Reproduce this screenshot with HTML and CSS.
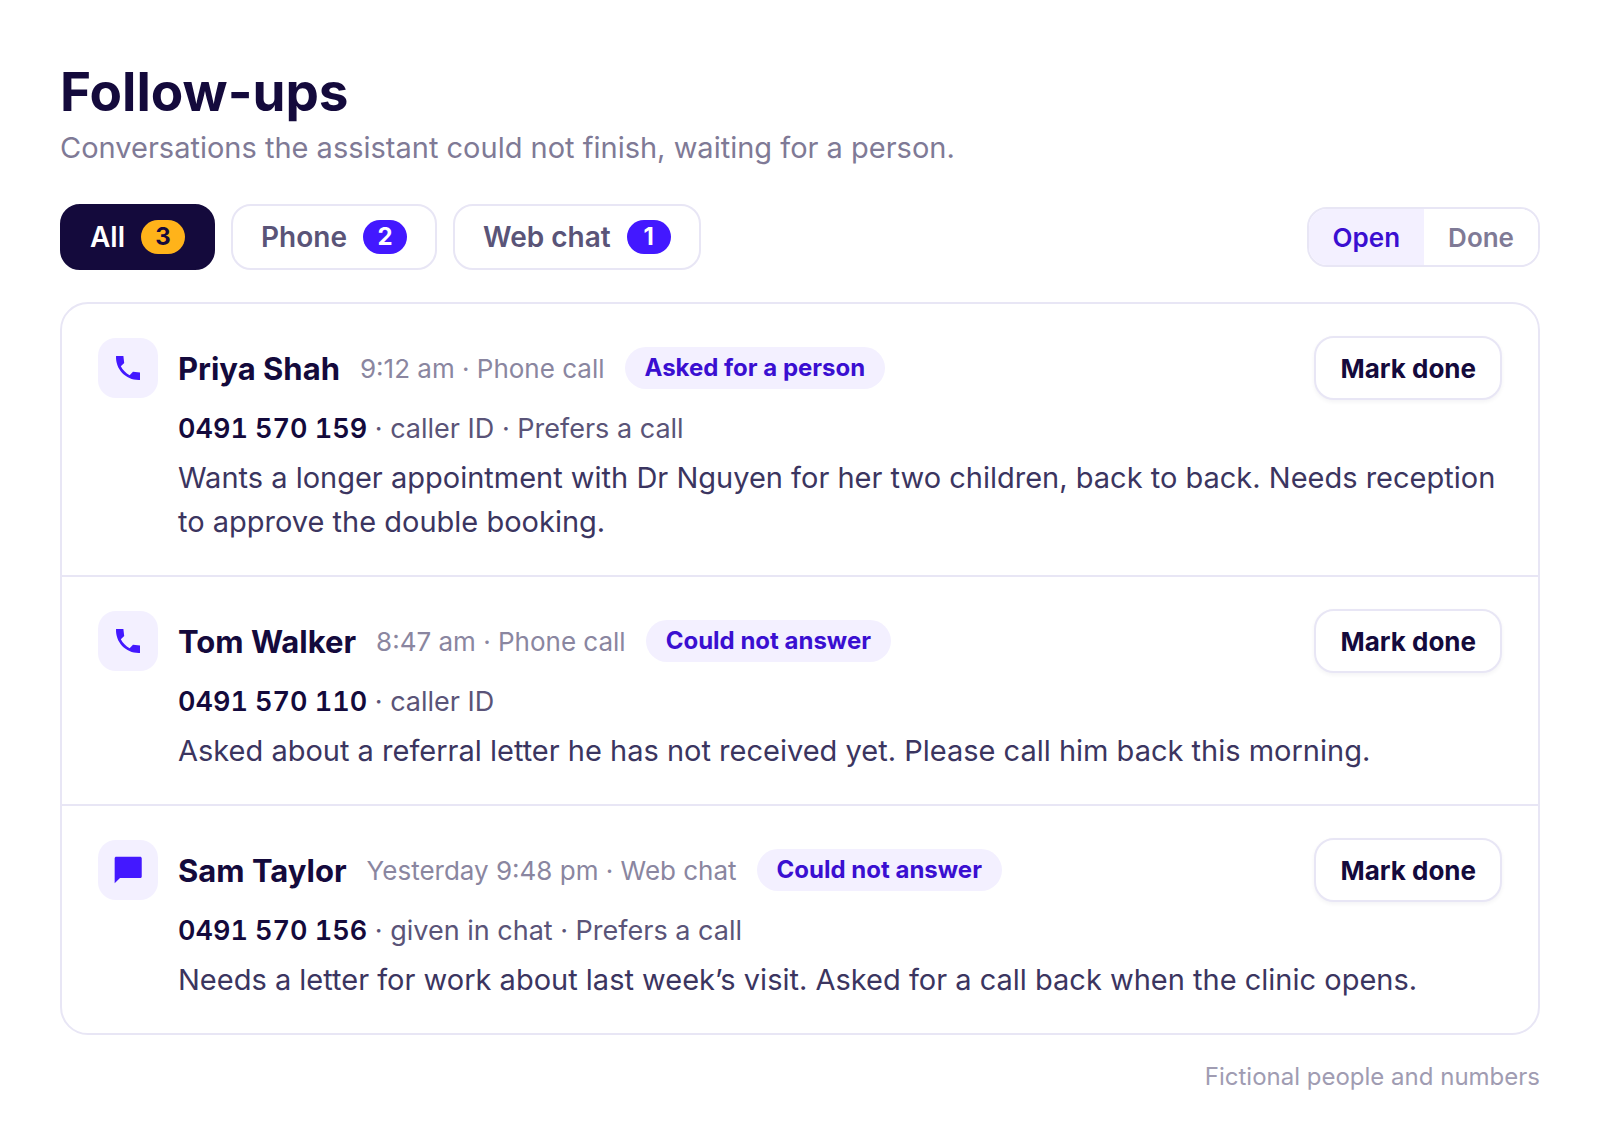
FILE: index.html
```html
<!DOCTYPE html>
<html lang="en">
<head>
  <meta charset="UTF-8" />
  <meta name="viewport" content="width=device-width, initial-scale=1.0"/>
  <title>Follow-ups</title>
  <link rel="stylesheet" href="styles.css">
</head>
<body>

<main class="page">
  <h1>Follow-ups</h1>
  <p class="subtitle">Conversations the assistant could not finish, waiting for a person.</p>

  <div class="toolbar">
    <div class="tabs">
      <button class="tab active" type="button">All <span class="count">3</span></button>
      <button class="tab" type="button">Phone <span class="count">2</span></button>
      <button class="tab" type="button">Web chat <span class="count">1</span></button>
    </div>
    <div class="toggle">
      <button class="active" type="button">Open</button>
      <button type="button">Done</button>
    </div>
  </div>

  <ul class="list">
    <li class="item">
      <div class="icon">
        <svg viewBox="0 0 24 24"><path d="M21 15.46l-5.27-.61-2.52 2.52c-2.83-1.44-5.15-3.75-6.59-6.59l2.53-2.53L8.54 3H3.03C2.45 13.18 10.82 21.55 21 20.97v-5.51z"/></svg>
      </div>
      <div class="body">
        <div class="head">
          <h2>Priya Shah</h2>
          <span class="meta">9:12 am · Phone call</span>
          <span class="tag">Asked for a person</span>
          <button class="done-btn" type="button">Mark done</button>
        </div>
        <p class="contact"><strong>0491 570 159</strong> · caller ID · Prefers a call</p>
        <p class="message">Wants a longer appointment with Dr Nguyen for her two children, back to back. Needs reception to approve the double booking.</p>
      </div>
    </li>

    <li class="item">
      <div class="icon">
        <svg viewBox="0 0 24 24"><path d="M21 15.46l-5.27-.61-2.52 2.52c-2.83-1.44-5.15-3.75-6.59-6.59l2.53-2.53L8.54 3H3.03C2.45 13.18 10.82 21.55 21 20.97v-5.51z"/></svg>
      </div>
      <div class="body">
        <div class="head">
          <h2>Tom Walker</h2>
          <span class="meta">8:47 am · Phone call</span>
          <span class="tag">Could not answer</span>
          <button class="done-btn" type="button">Mark done</button>
        </div>
        <p class="contact"><strong>0491 570 110</strong> · caller ID</p>
        <p class="message">Asked about a referral letter he has not received yet. Please call him back this morning.</p>
      </div>
    </li>

    <li class="item">
      <div class="icon">
        <svg viewBox="0 0 24 24"><path d="M21 2H3.2C2.5 2 2 2.5 2 3.2V22l4-4h15c.7 0 1.3-.5 1.3-1.2V3.2C22.300 2.500 21.700 2 21 2z"/></svg>
      </div>
      <div class="body">
        <div class="head">
          <h2>Sam Taylor</h2>
          <span class="meta">Yesterday 9:48 pm · Web chat</span>
          <span class="tag">Could not answer</span>
          <button class="done-btn" type="button">Mark done</button>
        </div>
        <p class="contact"><strong>0491 570 156</strong> · given in chat · Prefers a call</p>
        <p class="message">Needs a letter for work about last week’s visit. Asked for a call back when the clinic opens.</p>
      </div>
    </li>
  </ul>

  <p class="footnote">Fictional people and numbers</p>
</main>

</body>
</html>
```

FILE: styles.css
```css
* {
  box-sizing: border-box;
}

body {
  margin: 0;
  font-family: Inter, "Liberation Sans", sans-serif;
  background: #fff;
  color: #140a3c;
}

h1, h2, p, ul {
  margin: 0;
  padding: 0;
}

button {
  font-family: inherit;
  cursor: pointer;
}

.page {
  padding: 60px;
}

h1 {
  font-size: 53px;
  font-weight: 700;
  line-height: 64px;
}

.subtitle {
  margin-top: 2px;
  font-size: 29px;
  line-height: 44px;
  color: #7f7a96;
}

.toolbar {
  display: flex;
  justify-content: space-between;
  align-items: center;
  margin-top: 34px;
}

.tabs {
  display: flex;
  gap: 16px;
}

.tab {
  display: flex;
  align-items: center;
  gap: 16px;
  height: 66px;
  padding: 0 28px;
  background: #fff;
  border: 2px solid #e8e6f5;
  border-radius: 20px;
  font-size: 28px;
  font-weight: 600;
  color: #5a5478;
}

.tab.active {
  background: #140a3c;
  border-color: #140a3c;
  color: #fff;
}

.count {
  min-width: 44px;
  border-radius: 17px;
  background: #4318ff;
  color: #fff;
  font-size: 24px;
  font-weight: 700;
  line-height: 34px;
  text-align: center;
}

.tab.active .count {
  background: #ffb31a;
  color: #140a3c;
}

.toggle {
  display: flex;
  height: 60px;
  border: 2px solid #e8e6f5;
  border-radius: 20px;
  overflow: hidden;
}

.toggle button {
  padding: 0 24px;
  border: none;
  background: #fff;
  font-size: 26px;
  font-weight: 600;
  color: #7f7a96;
}

.toggle .active {
  background: #f3f0ff;
  color: #3a0fd1;
}

.list {
  margin-top: 32px;
  border: 2px solid #e8e6f5;
  border-radius: 28px;
  list-style: none;
}

.item {
  display: flex;
  gap: 20px;
  padding: 32px 36px 31px;
}

.item + .item {
  border-top: 2px solid #e8e6f5;
}

.icon {
  display: flex;
  flex: none;
  align-items: center;
  justify-content: center;
  width: 60px;
  height: 60px;
  margin-top: 2px;
  border-radius: 18px;
  background: #f3f0ff;
}

.icon svg {
  width: 32px;
  height: 32px;
  fill: #4318ff;
}

.body {
  flex: 1;
}

.head {
  display: flex;
  align-items: center;
  gap: 20px;
  margin-bottom: 8px;
}

h2 {
  font-size: 31px;
  font-weight: 700;
}

.meta {
  font-size: 26px;
  color: #8a86a0;
}

.tag {
  padding: 0 20px;
  border-radius: 21px;
  background: #f3f0ff;
  color: #3a0fd1;
  font-size: 24px;
  font-weight: 700;
  line-height: 42px;
}

.done-btn {
  height: 64px;
  margin-left: auto;
  padding: 0 24px;
  background: #fff;
  border: 2px solid #e8e6f5;
  border-radius: 20px;
  box-shadow: 0 2px 4px rgba(20, 10, 60, 0.05);
  font-size: 26px;
  font-weight: 700;
  color: #140a3c;
}

.contact {
  margin-bottom: 6px;
  font-size: 27px;
  line-height: 42px;
  color: #5a5478;
}

.contact strong {
  font-weight: 600;
  color: #140a3c;
  font-variant-numeric: tabular-nums;
}

.message {
  font-size: 29px;
  line-height: 44px;
  color: #3b3560;
}

.footnote {
  margin-top: 24px;
  font-size: 24px;
  line-height: 36px;
  text-align: right;
  color: #a09cb2;
}
```
